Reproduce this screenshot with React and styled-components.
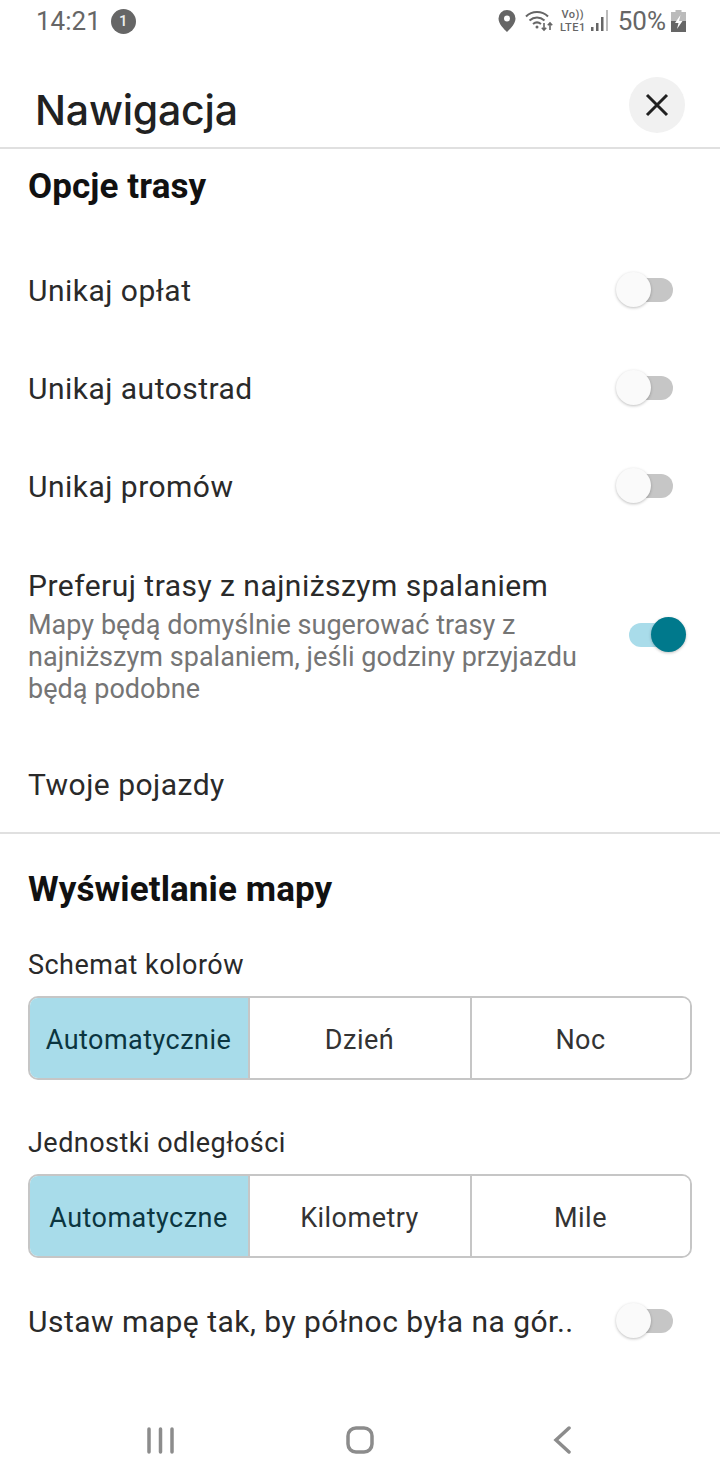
import React from 'react';
import styled, { createGlobalStyle } from 'styled-components';

const Global = createGlobalStyle`
  html, body { margin: 0; padding: 0; background: #fff; }
  body { font-family: 'Roboto', sans-serif; color: #212121; }
`;

const Page = styled.div`
  width: 720px;
  height: 1480px;
  overflow: hidden;
  display: flex;
  flex-direction: column;
  background: #fff;
`;

const StatusBar = styled.div`
  height: 42px;
  padding: 0 34px 0 36px;
  display: flex;
  align-items: center;
  justify-content: space-between;
  color: #666;
  font-size: 26px;
  box-sizing: border-box;
`;

const StatusGroup = styled.div`
  display: flex;
  align-items: center;
  gap: ${(p) => p.$gap || 10}px;
`;

const Badge = styled.span`
  width: 25px;
  height: 25px;
  border-radius: 50%;
  background: #666;
  color: #eee;
  font-size: 15px;
  font-weight: 500;
  display: flex;
  align-items: center;
  justify-content: center;
`;

const Network = styled.span`
  display: flex;
  flex-direction: column;
  align-items: center;
  font-size: 11px;
  line-height: 13px;
  letter-spacing: 0.5px;
  font-weight: 500;
  color: #666;
  margin: 0 -1px 0 2px;
`;

const Header = styled.div`
  height: 107px;
  box-sizing: border-box;
  border-bottom: 2px solid #e0e0e0;
  padding: 35px 35px 0 35px;
  display: flex;
  justify-content: space-between;
  align-items: flex-start;
`;

const Title = styled.div`
  font-family: 'Inter', sans-serif;
  font-size: 41px;
  font-weight: 450;
  line-height: 66px;
  letter-spacing: -0.2px;
  color: #212121;
`;

const CloseButton = styled.button`
  width: 56px;
  height: 56px;
  border: 0;
  padding: 0;
  border-radius: 50%;
  background: #f1f1f1;
  display: flex;
  align-items: center;
  justify-content: center;
`;

const Content = styled.div`
  flex: 1;
  display: flex;
  flex-direction: column;
`;

const Heading = styled.div`
  font-size: 35px;
  font-weight: 700;
  line-height: 40px;
  letter-spacing: 0.1px;
  color: #111;
  padding: ${(p) => p.$pad};
`;

const Row = styled.div`
  min-height: 98px;
  padding: 0 47px 0 28px;
  margin-top: ${(p) => p.$top || 0}px;
  box-sizing: border-box;
  display: flex;
  align-items: center;
  justify-content: space-between;
`;

const TallRow = styled(Row)`
  padding: 32px 47px 31px 28px;
`;

const LastRow = styled(Row)`
  min-height: 96px;
  padding-top: 2px;
`;

const RowText = styled.div`
  display: flex;
  flex-direction: column;
  width: 560px;
`;

const RowLabel = styled.div`
  font-size: 30px;
  line-height: 36px;
  letter-spacing: 0.48px;
  color: #2a2a2a;
  white-space: nowrap;
`;

const RowHint = styled.div`
  font-size: 27px;
  line-height: 32px;
  letter-spacing: 0.03px;
  color: #757575;
  margin-top: 5px;
`;

const Switch = styled.span`
  position: relative;
  width: 44px;
  height: 24px;
  margin-top: ${(p) => (p.$on ? -4 : -2)}px;
  border-radius: 12px;
  background: ${(p) => (p.$on ? '#a9dcea' : '#c6c6c6')};
  flex: none;
`;

const Thumb = styled.span`
  position: absolute;
  top: -6px;
  left: ${(p) => (p.$on ? 22 : -13)}px;
  width: 35px;
  height: 35px;
  border-radius: 50%;
  background: ${(p) => (p.$on ? '#00798c' : '#fafafa')};
  box-shadow: 0 1px 3px rgba(0, 0, 0, 0.25);
`;

const Divider = styled.div`
  height: 2px;
  background: #e0e0e0;
`;

const FieldLabel = styled.div`
  font-size: 27px;
  line-height: 36px;
  letter-spacing: 0.47px;
  color: #2a2a2a;
  padding: ${(p) => p.$pad};
`;

const Segments = styled.div`
  margin: 0 28px;
  height: 84px;
  box-sizing: border-box;
  border: 2px solid #c6c6c6;
  border-radius: 10px;
  overflow: hidden;
  display: grid;
  grid-template-columns: 218px 222px 1fr;
`;

const Segment = styled.div`
  display: flex;
  align-items: center;
  justify-content: center;
  padding: 3px 1px 0 0;
  font-size: 27px;
  letter-spacing: 0.47px;
  color: ${(p) => (p.$active ? '#0b3540' : '#333')};
  background: ${(p) => (p.$active ? '#a8dcea' : '#fff')};
  & + & { border-left: 2px solid #c6c6c6; }
`;

const NavBar = styled.div`
  height: 80px;
  padding: 0 60px;
  display: grid;
  grid-template-columns: repeat(3, 200px);
  align-items: center;
  justify-items: center;
`;

const Toggle = ({ on }) => (
  <Switch $on={on}>
    <Thumb $on={on} />
  </Switch>
);

const ToggleRow = ({ label, on, top }) => (
  <Row $top={top}>
    <RowLabel>{label}</RowLabel>
    <Toggle on={on} />
  </Row>
);

const SegmentGroup = ({ items }) => (
  <Segments>
    {items.map((item, i) => (
      <Segment key={item} $active={i === 0}>{item}</Segment>
    ))}
  </Segments>
);

const PinIcon = () => (
  <svg width="18" height="22" viewBox="0 0 18 22" style={{ marginRight: 4 }}>
    <path fill="#666" fillRule="evenodd" d="M9 0a8.5 8.5 0 0 1 8.5 8.5C17.500 14 12 19 9 22 6 19 .5 14 .5 8.500A8.500 8.500 0 0 1 9 0zm0 5.500a3 3 0 1 0 0 6 3 3 0 0 0 0-6z" />
  </svg>
);

const WifiIcon = () => (
  <svg width="28" height="24" viewBox="0 0 28 24" fill="none" stroke="#666" strokeWidth="2">
    <path d="M1 7.500C7 1.500 17 1.500 23 7.500" />
    <path d="M4.500 11.500C9 7.500 15 7.500 19.500 11.500" />
    <path d="M8 15c2.500-2 5.500-2 8 0" />
    <circle cx="12" cy="18" r="1.500" fill="#666" stroke="none" />
    <path strokeWidth="1.600" d="M19 14v7M16.800 18.800 19 21l2.200-2.200M25 21v-7M22.800 16.200 25 14l2.200 2.200" />
  </svg>
);

const SignalIcon = () => (
  <svg width="20" height="22" viewBox="0 0 20 22" style={{ marginRight: 3 }}>
    <rect x="1" y="17" width="2.500" height="4" fill="#666" />
    <rect x="6" y="13" width="2.500" height="8" fill="#666" />
    <rect x="11" y="7" width="2.500" height="14" fill="#666" />
    <rect x="16" y="0" width="2" height="21" fill="#bbb" />
  </svg>
);

const BatteryIcon = () => (
  <svg width="15" height="22" viewBox="0 0 15 22">
    <path fill="#bbb" d="M4.500 0h6v2H15v10H0V2h4.500z" />
    <rect y="11" width="15" height="11" fill="#666" />
    <path fill="#fff" d="M9.500 5 4 13h3.500L6 19l5.500-8H8z" />
  </svg>
);

const CloseIcon = () => (
  <svg width="24" height="24" viewBox="0 0 24 24" fill="none" stroke="#212121" strokeWidth="3">
    <path d="M2 2l20 20M22 2 2 22" />
  </svg>
);

const RecentsIcon = () => (
  <svg width="27" height="27" viewBox="0 0 27 27" fill="none" stroke="#8c8c8c" strokeWidth="3.500" strokeLinecap="round">
    <path d="M2 2v23M13.500 2v23M25 2v23" />
  </svg>
);

const HomeIcon = () => (
  <svg width="28" height="28" viewBox="0 0 28 28" fill="none" stroke="#8c8c8c" strokeWidth="3.500">
    <rect x="2" y="2" width="24" height="24" rx="8" />
  </svg>
);

const BackIcon = () => (
  <svg width="24" height="28" viewBox="0 0 24 28" fill="none" stroke="#8c8c8c" strokeWidth="3.500" strokeLinecap="round">
    <path d="M21 2 8 14l13 12" />
  </svg>
);

export default function App() {
  return (
    <Page>
      <Global />
      <StatusBar>
        <StatusGroup>
          <span>14:21</span>
          <Badge>1</Badge>
        </StatusGroup>
        <StatusGroup $gap={5}>
          <PinIcon />
          <WifiIcon />
          <Network>
            <span>Vo))</span>
            <span>LTE1</span>
          </Network>
          <SignalIcon />
          <span>50%</span>
          <BatteryIcon />
        </StatusGroup>
      </StatusBar>
      <Header>
        <Title>Nawigacja</Title>
        <CloseButton>
          <CloseIcon />
        </CloseButton>
      </Header>
      <Content>
        <Heading $pad="18px 28px 35px">Opcje trasy</Heading>
        <ToggleRow label="Unikaj opłat" />
        <ToggleRow label="Unikaj autostrad" />
        <ToggleRow label="Unikaj promów" />
        <TallRow>
          <RowText>
            <RowLabel>Preferuj trasy z najniższym spalaniem</RowLabel>
            <RowHint>
              Mapy będą domyślnie sugerować trasy z najniższym spalaniem, jeśli godziny przyjazdu będą podobne
            </RowHint>
          </RowText>
          <Toggle on />
        </TallRow>
        <LastRow>
          <RowLabel>Twoje pojazdy</RowLabel>
        </LastRow>
        <Divider />
        <Heading $pad="36px 28px 0">Wyświetlanie mapy</Heading>
        <FieldLabel $pad="37px 28px 13px">Schemat kolorów</FieldLabel>
        <SegmentGroup items={['Automatycznie', 'Dzień', 'Noc']} />
        <FieldLabel $pad="45px 28px 13px">Jednostki odległości</FieldLabel>
        <SegmentGroup items={['Automatyczne', 'Kilometry', 'Mile']} />
        <ToggleRow label="Ustaw mapę tak, by północ była na gór.." top={15} />
      </Content>
      <NavBar>
        <RecentsIcon />
        <HomeIcon />
        <BackIcon />
      </NavBar>
    </Page>
  );
}
